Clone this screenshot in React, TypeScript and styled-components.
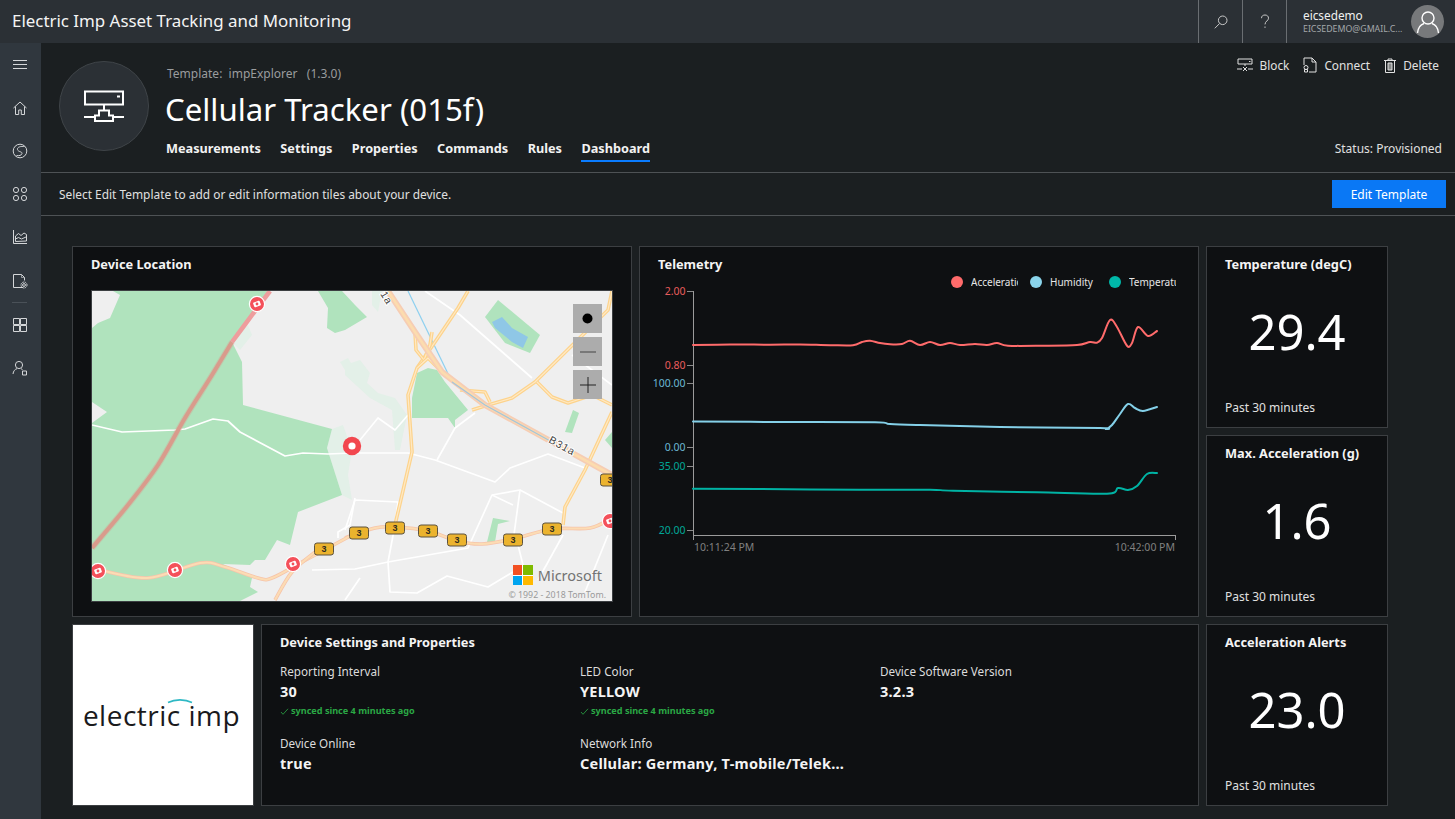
import * as React from 'react';
import styled, { createGlobalStyle } from 'styled-components';

const FONT = '"Noto Sans", "Open Sans", sans-serif';

const GlobalStyle = createGlobalStyle`
  html, body {
    margin: 0;
    padding: 0;
    height: 100%;
    overflow: hidden;
    background: #1b1f21;
    font-family: ${FONT};
    color: #fff;
  }
  * { box-sizing: border-box; }
`;

const Page = styled.div`
  width: 1455px;
  height: 819px;
  display: flex;
  flex-direction: column;
  overflow: hidden;
`;

const TopBar = styled.header`
  height: 43px;
  flex: none;
  display: flex;
  align-items: stretch;
  background: #2b3035;
`;

const AppTitle = styled.div`
  flex: 1;
  padding-left: 12px;
  font-size: 16.9px;
  line-height: 42px;
  color: #f4f4f4;
`;

const TopButton = styled.div`
  width: 44px;
  display: flex;
  align-items: center;
  justify-content: center;
  border-left: 1px solid #6a6e72;
  color: #c8c8c8;
`;

const UserBox = styled.div`
  width: 169px;
  padding: 0 11px 0 16px;
  display: flex;
  align-items: center;
  justify-content: space-between;
  border-left: 1px solid #6a6e72;
`;

const UserText = styled.div`
  width: 100px;
  margin-top: -2px;
`;

const UserName = styled.div`
  font-size: 11.8px;
  line-height: 16px;
  color: #f0f0f0;
`;

const UserMail = styled.div`
  font-size: 8.8px;
  line-height: 12px;
  color: #a4a8ab;
  white-space: nowrap;
`;

const Avatar = styled.div`
  width: 33px;
  height: 33px;
  border-radius: 50%;
  background: #77797b;
  display: flex;
  align-items: center;
  justify-content: center;
`;

const Body = styled.div`
  flex: 1;
  display: flex;
  min-height: 0;
`;

const Sidebar = styled.nav`
  width: 41px;
  flex: none;
  display: flex;
  flex-direction: column;
  align-items: flex-start;
  background: #30373e;
`;

const SideItem = styled.div`
  width: 40px;
  height: 43.2px;
  display: flex;
  align-items: center;
  justify-content: center;
  color: #d4d6d8;
`;

const SideRule = styled.div`
  width: 15px;
  height: 1px;
  margin-left: 12px;
  background: #4a5158;
`;

const Main = styled.main`
  flex: 1;
  min-width: 0;
  background: #1b1f21;
`;

const DeviceHeader = styled.section`
  height: 130px;
  position: relative;
  padding: 18px 13px 0 18px;
  display: flex;
  gap: 16px;
  border-bottom: 1px solid #4e5255;
`;

const DeviceBadge = styled.div`
  width: 90px;
  height: 90px;
  flex: none;
  border-radius: 50%;
  background: #2b3035;
  border: 1px solid #3f4448;
  display: flex;
  align-items: center;
  justify-content: center;
`;

const DeviceInfo = styled.div`
  flex: 1;
  display: flex;
  flex-direction: column;
`;

const TemplateLine = styled.div`
  margin: 3px 0 0 2px;
  font-size: 12px;
  line-height: 20px;
  color: #9a9c9e;
  white-space: pre;
`;

const DeviceName = styled.h1`
  margin: 3px 0 0;
  font-size: 31.2px;
  line-height: 44px;
  font-weight: 400;
  color: #fff;
`;

const Tabs = styled.div`
  margin: 7px 0 0 1px;
  display: flex;
  gap: 19.5px;
`;

const Tab = styled.div<{ $active?: boolean }>`
  height: 24px;
  font-size: 12.7px;
  line-height: 20px;
  font-weight: 700;
  color: #f2f2f2;
  border-bottom: 2px solid ${(p) => (p.$active ? '#0a7cff' : 'transparent')};
`;

const HeaderSide = styled.div`
  margin-top: -6px;
  display: flex;
  flex-direction: column;
  align-items: flex-end;
  justify-content: space-between;
  padding-bottom: 13px;
`;

const Actions = styled.div`
  display: flex;
  gap: 14px;
  margin-right: 3px;
`;

const Action = styled.div`
  display: flex;
  align-items: center;
  gap: 7px;
  font-size: 11.8px;
  line-height: 20px;
  color: #e2e2e2;
`;

const StatusText = styled.div`
  font-size: 12px;
  line-height: 20px;
  color: #e0e0e0;
`;

const HintBar = styled.section`
  height: 43px;
  padding: 7px 9px 7px 18px;
  display: flex;
  align-items: center;
  justify-content: space-between;
  border-bottom: 1px solid #4e5255;
`;

const HintText = styled.div`
  font-size: 11.9px;
  color: #e0e0e0;
`;

const EditButton = styled.button`
  width: 114px;
  height: 28px;
  border: 0;
  padding: 0;
  background: #0a78f5;
  color: #fff;
  font-family: ${FONT};
  font-size: 12px;
`;

const TileGrid = styled.div`
  margin: 30px 0 0 31px;
  display: grid;
  grid-template-columns: repeat(7, 182px);
  grid-auto-rows: 182px;
  gap: 7px;
`;

const Card = styled.div<{ $cols?: number; $rows?: number }>`
  grid-column: span ${(p) => p.$cols ?? 1};
  grid-row: span ${(p) => p.$rows ?? 1};
  position: relative;
  background: #0e1012;
  border: 1px solid #3c3f42;
  display: flex;
  flex-direction: column;
  min-width: 0;
`;

const CardTitle = styled.div`
  flex: none;
  height: 27px;
  padding: 9px 18px 0;
  font-size: 12.8px;
  line-height: 17px;
  font-weight: 700;
  color: #f4f4f4;
  white-space: nowrap;
`;

const MetricValue = styled.div`
  flex: 1;
  display: flex;
  align-items: center;
  justify-content: center;
  padding-bottom: 11px;
  font-size: 49px;
  line-height: 60px;
  color: #fff;
`;

const MetricFoot = styled.div`
  flex: none;
  height: 29px;
  padding: 0 18px;
  font-size: 12px;
  line-height: 20px;
  color: #e0e0e0;
`;

const MapFrame = styled.div`
  position: relative;
  width: 522px;
  height: 312px;
  margin: 16px 0 0 18px;
  border: 1px solid #3c3f42;
  overflow: hidden;
  background: #efefef;
`;

const MapControls = styled.div`
  position: absolute;
  top: 13px;
  right: 10px;
  display: flex;
  flex-direction: column;
  gap: 4px;
`;

const MapControl = styled.div`
  width: 29px;
  height: 29px;
  background: #acacac;
  display: flex;
  align-items: center;
  justify-content: center;
`;

const Brand = styled.div`
  position: absolute;
  right: 10px;
  bottom: 16px;
  display: flex;
  align-items: center;
  gap: 5px;
  font-size: 14.5px;
  line-height: 20px;
  color: #737373;
`;

const BrandSquares = styled.div`
  width: 20px;
  height: 20px;
  display: grid;
  grid-template-columns: 1fr 1fr;
  gap: 1px;
  background: #fff;
`;

const BrandSquare = styled.span<{ $color: string }>`
  background: ${(p) => p.$color};
`;

const CopyRight = styled.div`
  position: absolute;
  right: 6px;
  bottom: 0;
  font-size: 8.8px;
  line-height: 11px;
  color: #9a9a9a;
  white-space: nowrap;
`;

const LogoCard = styled(Card)`
  background: #fff;
  align-items: center;
  justify-content: center;
`;

const LogoWord = styled.div`
  position: relative;
  margin-right: 3px;
  font-family: "Open Sans", sans-serif;
  font-weight: 400;
  font-size: 28px;
  line-height: 34px;
  letter-spacing: 0.5px;
  color: #1a1a1c;
  white-space: nowrap;
`;

const LogoArc = styled.svg`
  position: absolute;
  left: 84px;
  top: 0;
`;

const PropsGrid = styled.div`
  padding: 10px 18px 0;
  display: grid;
  grid-template-columns: repeat(3, 300px);
  grid-auto-rows: 72px;
`;

const PropCell = styled.div`
  min-width: 0;
`;

const PropLabel = styled.div`
  font-size: 11.7px;
  line-height: 18px;
  color: #dcdcdc;
`;

const PropValue = styled.div`
  font-size: 14.5px;
  line-height: 22px;
  font-weight: 700;
  letter-spacing: 0.25px;
  color: #f4f4f4;
  white-space: nowrap;
`;

const Synced = styled.div`
  margin-top: 2px;
  display: flex;
  align-items: center;
  gap: 2px;
  font-size: 9.1px;
  line-height: 14px;
  font-weight: 700;
  color: #2aa845;
`;

type Pt = [number, number];

// catmull-rom through the points, good enough for the telemetry lines and map roads
const smooth = (pts: Pt[]) => {
  let d = `M${pts[0][0]} ${pts[0][1]}`;
  for (let i = 0; i < pts.length - 1; i++) {
    const p0 = pts[i - 1] || pts[i];
    const p1 = pts[i];
    const p2 = pts[i + 1];
    const p3 = pts[i + 2] || p2;
    const c1x = p1[0] + (p2[0] - p0[0]) / 6;
    const c1y = p1[1] + (p2[1] - p0[1]) / 6;
    const c2x = p2[0] - (p3[0] - p1[0]) / 6;
    const c2y = p2[1] - (p3[1] - p1[1]) / 6;
    d += ` C${c1x.toFixed(1)} ${c1y.toFixed(1)} ${c2x.toFixed(1)} ${c2y.toFixed(1)} ${p2[0]} ${p2[1]}`;
  }
  return d;
};

const line = (pts: Pt[]) => pts.map((p) => p.join(',')).join(' ');

const ACC: Pt[] = [[693, 345], [730, 344.5], [770, 344.7], [800, 344.5], [830, 345.2], [853, 345.3], [862, 342], [870, 340.7], [880, 343], [890, 344.2], [902, 344], [910, 340.7], [920, 345], [930, 342], [940, 345], [950, 343], [960, 345], [975, 344], [987, 345], [997, 343], [1008, 345.7], [1043, 345.7], [1077, 345], [1090, 342], [1097, 342.7], [1102, 338], [1110, 320], [1117, 327], [1127, 345.7], [1132, 343], [1138, 327], [1148, 336], [1157, 331]];
const HUM: Pt[] = [[693, 421.5], [780, 422], [875, 422.3], [890, 424], [920, 425], [1000, 427], [1100, 428], [1106, 429], [1112, 425], [1120, 414], [1128, 404], [1135, 408], [1143, 411], [1157, 407]];
const TMP: Pt[] = [[693, 488.7], [760, 489], [860, 489.7], [930, 489.7], [953, 490.7], [1037, 492.3], [1107, 493.7], [1118, 488], [1128, 490], [1137, 486], [1147, 474], [1157, 473]];

const TICKS: { y: number; label: string; color: string }[] = [
  { y: 291, label: '2.00', color: '#e85c5c' },
  { y: 365, label: '0.80', color: '#e85c5c' },
  { y: 383, label: '100.00', color: '#6cb8d4' },
  { y: 447, label: '0.00', color: '#6cb8d4' },
  { y: 466, label: '35.00', color: '#00a899' },
  { y: 530, label: '20.00', color: '#00a899' },
];

const LEGEND = [
  { cx: 957, tx: 971, clip: 1018, color: '#ff6b6b', label: 'Acceleration', id: 'lg-a' },
  { cx: 1036, tx: 1050, clip: 1100, color: '#8ad4eb', label: 'Humidity', id: 'lg-h' },
  { cx: 1115, tx: 1129, clip: 1176, color: '#00b8a9', label: 'Temperature', id: 'lg-t' },
];

const TelemetryChart = () => (
  <svg width={558} height={342} viewBox="640 274 558 342" style={{ display: 'block' }}>
    {LEGEND.map((l) => (
      <g key={l.id}>
        <clipPath id={l.id}>
          <rect x={l.tx} y={272} width={l.clip - l.tx} height={20} />
        </clipPath>
        <circle cx={l.cx} cy={282} r={6} fill={l.color} />
        <text x={l.tx} y={286} fontSize={10} fill="#e6e6e6" fontFamily={FONT} clipPath={`url(#${l.id})`}>{l.label}</text>
      </g>
    ))}
    <path d="M693.5 291V540M693 535.5H1176M1175.5 535V540" stroke="#9b9b9b" strokeWidth={1} fill="none" />
    {TICKS.map((t) => (
      <g key={t.label}>
        <line x1={687} x2={693} y1={t.y + 0.5} y2={t.y + 0.5} stroke="#8a8a8a" />
        <text x={685.5} y={t.y + 4} textAnchor="end" fontSize={10.5} fill={t.color} fontFamily={FONT}>{t.label}</text>
      </g>
    ))}
    <text x={694} y={551} fontSize={10.5} fill="#808080" fontFamily={FONT}>10:11:24 PM</text>
    <text x={1175} y={551} textAnchor="end" fontSize={10.5} fill="#808080" fontFamily={FONT}>10:42:00 PM</text>
    <path d={smooth(ACC)} fill="none" stroke="#ff6b6b" strokeWidth={2} strokeLinecap="round" />
    <path d={smooth(HUM)} fill="none" stroke="#84d0e8" strokeWidth={2} strokeLinecap="round" />
    <path d={smooth(TMP)} fill="none" stroke="#00b3a4" strokeWidth={2} strokeLinecap="round" />
  </svg>
);

const GREENS: Pt[][] = [
  [[92, 328], [98, 323], [110, 318], [120, 295], [113, 291], [270, 291], [232, 342], [242, 362], [243, 405], [332, 429], [327, 448], [342, 495], [298, 512], [290, 545], [277, 540], [265, 560], [255, 560], [250, 565], [223, 564], [252, 578], [250, 587], [258, 592], [240, 601], [92, 601], [92, 423], [107, 412], [92, 402]],
  [[318, 291], [342, 291], [355, 305], [367, 317], [345, 330], [335, 333], [327, 328], [328, 308]],
  [[412, 398], [417, 373], [428, 368], [437, 370], [445, 382], [468, 410], [455, 420], [455, 428], [448, 418], [412, 418]],
  [[485, 317], [498, 300], [540, 335], [530, 353], [505, 343]],
  [[565, 432], [573, 410], [579, 413], [572, 433]],
  [[605, 440], [612, 432], [612, 448]],
  [[487, 542], [493, 518], [510, 521], [498, 524], [495, 542]],
];

const PALE: Pt[][] = [
  [[332, 429], [343, 425], [352, 450], [348, 475], [352, 500], [342, 495], [327, 448]],
  [[345, 365], [360, 360], [370, 373], [367, 383], [378, 393], [395, 398], [407, 415], [400, 450], [395, 450], [392, 410], [370, 398], [345, 375]],
  [[340, 362], [348, 358], [355, 370], [348, 375]],
  [[232, 342], [248, 325], [252, 335], [240, 350]],
  [[372, 291], [382, 291], [378, 312], [372, 305]],
];

const WHITE_ROADS: Pt[][] = [
  [[92, 425], [122, 432], [175, 430], [185, 429], [213, 419], [228, 421], [240, 432], [285, 456], [303, 453], [328, 454], [352, 453], [408, 453], [435, 460], [495, 482], [510, 468], [548, 454], [585, 468]],
  [[360, 440], [378, 418], [395, 430], [408, 415]],
  [[437, 460], [455, 428], [475, 413]],
  [[425, 291], [460, 315], [532, 378]],
  [[572, 355], [612, 385]],
  [[345, 530], [355, 500], [398, 502], [395, 525], [388, 562], [390, 592], [417, 593], [447, 576], [488, 587], [513, 572]],
  [[312, 570], [355, 569], [388, 562], [468, 548], [492, 495], [520, 490], [513, 542]],
  [[492, 495], [513, 505]],
  [[520, 490], [563, 513]],
  [[518, 545], [528, 585]],
  [[563, 535], [538, 580]],
  [[608, 535], [585, 592]],
  [[355, 498], [350, 525], [338, 532], [338, 538]],
  [[345, 600], [360, 578]],
];

const ORANGE_ROADS: Pt[][] = [
  [[468, 291], [458, 308], [435, 342], [417, 368], [408, 395], [412, 452], [395, 525]],
  [[612, 291], [608, 310], [535, 382], [512, 398], [488, 405], [472, 410]],
  [[537, 382], [552, 397], [568, 403], [592, 395], [612, 405]],
  [[612, 412], [585, 470], [565, 507], [563, 525]],
  [[415, 332], [416, 350], [424, 360], [430, 345], [432, 332]],
  [[417, 368], [428, 358], [442, 372]],
  [[460, 390], [485, 392], [490, 402]],
];

const MAJOR_ROUTE: Pt[] = [[388, 291], [415, 332], [442, 372], [485, 405], [612, 475]];
const ROUTE_3A: Pt[] = [[345, 538], [375, 528], [395, 527], [428, 531], [457, 541], [482, 544], [513, 539], [552, 529], [590, 528], [612, 518]];
const ROUTE_3B: Pt[] = [[92, 568], [147, 578], [200, 563], [225, 567], [258, 578], [272, 578], [302, 562], [352, 535]];
const ROUTE_3C: Pt[] = [[275, 600], [292, 572], [315, 552]];

const SHIELDS: Pt[] = [[324, 549], [359, 533], [395, 528], [428, 531], [457, 540], [513, 540], [552, 529], [610, 480]];
const CAMERAS: Pt[] = [[257, 304], [98, 571], [175, 570], [293, 564], [610, 521]];

const MapDrawing = () => (
  <svg width={520} height={310} viewBox="92 291 520 310" style={{ display: 'block' }}>
    <rect x={92} y={291} width={520} height={310} fill="#efefef" />
    {PALE.map((p, i) => <polygon key={i} points={line(p)} fill="#e3f0e8" />)}
    {GREENS.map((p, i) => <polygon key={i} points={line(p)} fill="#b0e3bd" />)}
    <polygon points="492,322 502,317 512,328 528,337 523,348 512,342 495,328" fill="#8fc7e6" />
    {WHITE_ROADS.map((p, i) => <polyline key={i} points={line(p)} fill="none" stroke="#fff" strokeWidth={1.7} strokeLinejoin="round" />)}
    <polyline points={line([[408, 291], [452, 382]])} fill="none" stroke="#8dd0f0" strokeWidth={1.2} />
    {ORANGE_ROADS.map((p, i) => (
      <g key={i}>
        <polyline points={line(p)} fill="none" stroke="#fdd38c" strokeWidth={3.6} strokeLinejoin="round" />
        <polyline points={line(p)} fill="none" stroke="#ffe9c4" strokeWidth={1.2} strokeLinejoin="round" />
      </g>
    ))}
    <polyline points={line(MAJOR_ROUTE)} fill="none" stroke="#f6cdb4" strokeWidth={6} strokeLinejoin="round" />
    <polyline points={line(MAJOR_ROUTE)} fill="none" stroke="#fcdcae" strokeWidth={2.6} strokeLinejoin="round" />
    <polyline points={line([[452, 382], [485, 405], [552, 442]])} fill="none" stroke="#a3c4dc" strokeWidth={1.2} />
    {[ROUTE_3A, ROUTE_3B, ROUTE_3C].map((p, i) => (
      <g key={i}>
        <path d={smooth(p)} fill="none" stroke="#f6c4aa" strokeWidth={3.6} />
        <path d={smooth(p)} fill="none" stroke="#fcdcb4" strokeWidth={2} />
      </g>
    ))}
    <path d={smooth([[92, 548], [128, 505], [158, 465], [185, 418], [212, 375], [232, 342]])} fill="none" stroke="#d99b8c" strokeWidth={6} opacity={0.35} />
    <path d={smooth([[92, 548], [128, 505], [158, 465], [185, 418], [212, 375], [232, 342]])} fill="none" stroke="#d99b8c" strokeWidth={4} />
    <path d={smooth([[232, 342], [252, 315], [270, 291]])} fill="none" stroke="#ee9d9d" strokeWidth={4.6} />
    <text x={548} y={442} fontSize={10.5} fill="#444" stroke="#fff" strokeWidth={2} paintOrder="stroke" fontFamily="Liberation Sans, sans-serif" transform="rotate(29 548 442)" letterSpacing={1}>B31a</text>
    <text x={380} y={294} fontSize={10.5} fill="#444" stroke="#fff" strokeWidth={2} paintOrder="stroke" fontFamily="Liberation Sans, sans-serif" transform="rotate(58 380 294)" letterSpacing={1}>1a</text>
    {SHIELDS.map(([x, y]) => (
      <g key={`${x}-${y}`}>
        <rect x={x - 9.5} y={y - 6} width={19} height={12} rx={2.5} fill="#ebb32e" stroke="#5c5240" strokeWidth={1} />
        <text x={x} y={y + 3.3} textAnchor="middle" fontSize={9} fontWeight={700} fill="#2c2a20" fontFamily="Liberation Sans, sans-serif">3</text>
      </g>
    ))}
    {CAMERAS.map(([x, y]) => (
      <g key={`${x}-${y}`}>
        <circle cx={x} cy={y} r={7.6} fill="#f4505a" stroke="#fff" strokeWidth={1.2} />
        <rect x={x - 3.5} y={y - 2.5} width={7} height={5} rx={1} fill="#fff" transform={`rotate(-20 ${x} ${y})`} />
        <circle cx={x} cy={y} r={1.4} fill="#f4505a" />
      </g>
    ))}
    <circle cx={352} cy={446} r={9.2} fill="#f2474f" />
    <circle cx={352} cy={446} r={3.6} fill="#fff" />
  </svg>
);

const Glyph: React.FC<{ size?: number; sw?: number; children: React.ReactNode }> = ({ size = 16, sw = 1, children }) => (
  <svg width={size} height={size} viewBox="0 0 16 16" fill="none" stroke="currentColor" strokeWidth={sw}>
    {children}
  </svg>
);

const SIDE_ICONS: React.ReactNode[] = [
  <Glyph key="menu"><path d="M1 3.500h14M1 7.500h14M1 11.500h14" /></Glyph>,
  <Glyph key="home"><path d="M1.500 8L8 2l6.500 6M3.500 6.500v8h3.200V10h2.600v4.500h3.200v-8" /></Glyph>,
  <Glyph key="gauge"><circle cx="8" cy="8" r="6.800" /><path d="M12.500 3.500C9 3 5 4 5.500 6.500S10.500 8.500 10 10.500 7 13 4.500 12.500" /></Glyph>,
  <Glyph key="apps"><circle cx="4" cy="4" r="2.600" /><circle cx="12" cy="4" r="2.600" /><circle cx="4" cy="12" r="2.600" /><circle cx="12" cy="12" r="2.600" /></Glyph>,
  <Glyph key="chart"><path d="M1.500 1v13.500H15" /><path d="M3.500 12.500V7l3-2.500 2.500 2 3-2.500 2.500 1.500v6.500z" /><path d="M3.500 10l3-1.500 3 1.500 4.500-2" /></Glyph>,
  <Glyph key="file"><path d="M11 14.500H1.500v-13h8l3 3v3" /><path d="M9.500 1.500v3h3" opacity={0.6} /><circle cx="12" cy="12" r="1.400" /><circle cx="12" cy="12" r="3" strokeDasharray="1.600 0.800" /></Glyph>,
  null,
  <Glyph key="grid"><path d="M1.500 1.500h6v6h-6zM8.500 1.500h6v6h-6zM1.500 8.500h6v6h-6zM8.500 8.500h6v6h-6z" /></Glyph>,
  <Glyph key="user"><circle cx="7" cy="5" r="3.600" /><path d="M1 14c.3-3 2-4.800 4-5.300M9 8.800c.6.2 1.200.5 1.600 1" /><path d="M10.500 11h4v4h-4z" /></Glyph>,
];

const BRAND_COLORS = ['#f25022', '#7fba00', '#00a4ef', '#ffb900'];
const TAB_NAMES = ['Measurements', 'Settings', 'Properties', 'Commands', 'Rules', 'Dashboard'];

const Metric: React.FC<{ title: string; value: string }> = ({ title, value }) => (
  <Card>
    <CardTitle>{title}</CardTitle>
    <MetricValue>{value}</MetricValue>
    <MetricFoot>Past 30 minutes</MetricFoot>
  </Card>
);

const Prop: React.FC<{ label: string; value: string; synced?: boolean }> = ({ label, value, synced }) => (
  <PropCell>
    <PropLabel>{label}</PropLabel>
    <PropValue>{value}</PropValue>
    {synced && (
      <Synced>
        <svg width={9} height={9} viewBox="0 0 9 9" fill="none" stroke="#2aa845" strokeWidth={0.8}>
          <path d="M1 5l2 2.300L8 1.800" />
        </svg>
        synced since 4 minutes ago
      </Synced>
    )}
  </PropCell>
);

const App: React.FC = () => (
  <Page>
    <GlobalStyle />
    <TopBar>
      <AppTitle>Electric Imp Asset Tracking and Monitoring</AppTitle>
      <TopButton>
        <svg width={14} height={14} viewBox="0 0 14 14" fill="none" stroke="currentColor" strokeWidth={1}>
          <circle cx="8.700" cy="5.300" r="4.300" />
          <path d="M5.700 8.400L.8 13.300" />
        </svg>
      </TopButton>
      <TopButton>
        <svg width={10} height={15} viewBox="0 0 10 15" fill="none" stroke="currentColor" strokeWidth={1}>
          <path d="M1.500 4.200C1.500 2 3 1 5 1s3.500 1.200 3.500 3.200c0 2.600-3.500 3-3.500 6.200" />
          <path d="M5 12.500v1.400" />
        </svg>
      </TopButton>
      <UserBox>
        <UserText>
          <UserName>eicsedemo</UserName>
          <UserMail>EICSEDEMO@GMAIL.C...</UserMail>
        </UserText>
        <Avatar>
          <svg width={24} height={24} viewBox="0 0 24 24" fill="none" stroke="#fff" strokeWidth={1.400}>
            <circle cx="12" cy="8" r="6" />
            <path d="M1.500 23c.5-5 3.500-8.500 6.500-9.500M22.500 23c-.5-5-3.500-8.500-6.500-9.500" />
          </svg>
        </Avatar>
      </UserBox>
    </TopBar>
    <Body>
      <Sidebar>
        {SIDE_ICONS.map((icon, i) => (icon ? <SideItem key={i}>{icon}</SideItem> : <SideRule key={i} />))}
      </Sidebar>
      <Main>
        <DeviceHeader>
          <DeviceBadge>
            <svg width={42} height={33} viewBox="0 0 42 33" fill="none" stroke="#fff" strokeWidth={2}>
              <path d="M2 1.500h38v13H2z" />
              <path d="M34 6.500h3" />
              <path d="M21 15v5M16 20.500h10v5h4v5.500H12v-5.500h4z" />
              <path d="M1 27h11M30 27h11" />
            </svg>
          </DeviceBadge>
          <DeviceInfo>
            <TemplateLine>{'Template:  impExplorer   (1.3.0)'}</TemplateLine>
            <DeviceName>Cellular Tracker (015f)</DeviceName>
            <Tabs>
              {TAB_NAMES.map((t) => (
                <Tab key={t} $active={t === 'Dashboard'}>{t}</Tab>
              ))}
            </Tabs>
          </DeviceInfo>
          <HeaderSide>
            <Actions>
              <Action>
                <svg width={16} height={14} viewBox="0 0 16 14" fill="none" stroke="currentColor" strokeWidth={1}>
                  <path d="M1 1h14v5H1zM12 3.500h1.500" />
                  <path d="M8 6v2M0 11h5M11 11h5M6 9l4 4M10 9l-4 4" />
                </svg>
                Block
              </Action>
              <Action>
                <svg width={14} height={16} viewBox="0 0 14 16" fill="none" stroke="currentColor" strokeWidth={1}>
                  <path d="M1 8V1h8l4 4v10H6" />
                  <path d="M9 1v4h4" />
                  <circle cx="3" cy="10.500" r="2" />
                  <path d="M1.500 12.500h3v2.500h-3z" />
                </svg>
                Connect
              </Action>
              <Action>
                <svg width={12} height={15} viewBox="0 0 12 15" fill="none" stroke="currentColor" strokeWidth={1}>
                  <path d="M0 2.500h12M4 2.500V1h4v1.500M1.500 2.500V14.500h9V2.500" />
                  <path d="M4 5h4v7H4z" fill="currentColor" fillOpacity={0.55} />
                </svg>
                Delete
              </Action>
            </Actions>
            <StatusText>Status: Provisioned</StatusText>
          </HeaderSide>
        </DeviceHeader>
        <HintBar>
          <HintText>Select Edit Template to add or edit information tiles about your device.</HintText>
          <EditButton>Edit Template</EditButton>
        </HintBar>
        <TileGrid>
          <Card $cols={3} $rows={2}>
            <CardTitle>Device Location</CardTitle>
            <MapFrame>
              <MapDrawing />
              <MapControls>
                <MapControl>
                  <svg width={11} height={11} viewBox="0 0 11 11"><circle cx="5.500" cy="5.500" r="5" fill="#000" /></svg>
                </MapControl>
                <MapControl>
                  <svg width={16} height={2} viewBox="0 0 16 2"><path d="M0 1h16" stroke="#444" /></svg>
                </MapControl>
                <MapControl>
                  <svg width={16} height={16} viewBox="0 0 16 16"><path d="M0 8h16M8 0v16" stroke="#222" /></svg>
                </MapControl>
              </MapControls>
              <Brand>
                <BrandSquares>
                  {BRAND_COLORS.map((c) => <BrandSquare key={c} $color={c} />)}
                </BrandSquares>
                Microsoft
              </Brand>
              <CopyRight>© 1992 - 2018 TomTom.</CopyRight>
            </MapFrame>
          </Card>
          <Card $cols={3} $rows={2}>
            <CardTitle>Telemetry</CardTitle>
            <TelemetryChart />
          </Card>
          <Metric title="Temperature (degC)" value="29.4" />
          <Metric title="Max. Acceleration (g)" value="1.6" />
          <LogoCard>
            <LogoWord>
              electric imp
              <LogoArc width={26} height={6} viewBox="0 0 26 6" fill="none" stroke="#2eb8c4" strokeWidth={1.600}>
                <path d="M1 4.500C8 1 18 1 25 4.500" />
              </LogoArc>
            </LogoWord>
          </LogoCard>
          <Card $cols={5}>
            <CardTitle>Device Settings and Properties</CardTitle>
            <PropsGrid>
              <Prop label="Reporting Interval" value="30" synced />
              <Prop label="LED Color" value="YELLOW" synced />
              <Prop label="Device Software Version" value="3.2.3" />
              <Prop label="Device Online" value="true" />
              <Prop label="Network Info" value="Cellular: Germany, T-mobile/Telek..." />
            </PropsGrid>
          </Card>
          <Metric title="Acceleration Alerts" value="23.0" />
        </TileGrid>
      </Main>
    </Body>
  </Page>
);

export default App;
